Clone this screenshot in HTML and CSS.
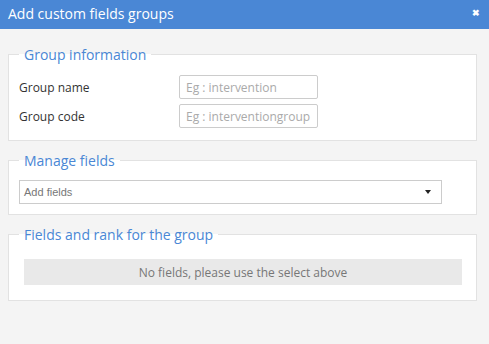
FILE: index.html
```html
<!DOCTYPE html>
<html lang="en">
<head>
    <meta charset="UTF-8">
    <title>Add custom fields groups</title>
    <link rel="stylesheet" href="styles.css">
</head>
<body>
    <div class="modal">
        <div class="modal-header">
            <h2 class="modal-title">Add custom fields groups</h2>
            <span class="close">&#10006;</span>
        </div>

        <div class="modal-body">
            <fieldset class="box">
                <legend>Group information</legend>
                <div class="form-row">
                    <label>Group name</label>
                    <input type="text" class="text-input" placeholder="Eg : intervention">
                </div>
                <div class="form-row">
                    <label>Group code</label>
                    <input type="text" class="text-input" placeholder="Eg : interventiongroup">
                </div>
            </fieldset>

            <fieldset class="box box-compact">
                <legend>Manage fields</legend>
                <div class="select">
                    <span>Add fields</span>
                    <span class="caret"></span>
                </div>
            </fieldset>

            <fieldset class="box">
                <legend>Fields and rank for the group</legend>
                <div class="empty">No fields, please use the select above</div>
            </fieldset>
        </div>
    </div>
</body>
</html>
```

FILE: styles.css
```css
* {
    margin: 0;
    padding: 0;
    box-sizing: border-box;
}

body {
    font-family: 'Open Sans', 'Liberation Sans', sans-serif;
    background: #f4f4f4;
    color: #333;
}

.modal-header {
    background: #4a87d5;
    height: 29px;
    display: flex;
    align-items: center;
    justify-content: space-between;
    padding: 0 9px 3px 8px;
}

.modal-title {
    color: #fff;
    font-size: 14px;
    font-weight: 400;
}

.close {
    color: #fff;
    font-size: 9px;
    font-weight: 700;
    margin-top: -1px;
}

.modal-body {
    padding: 16px 12px 0 8px;
}

.box {
    background: #fff;
    border: 1px solid #e2e2e2;
    padding: 11px 10px 12px 10px;
    margin-bottom: 10px;
}

.box-compact {
    padding: 10px 10px 10px 10px;
}

.box legend {
    color: #4a87d5;
    font-size: 14px;
    padding: 0 5px;
}

.form-row {
    display: flex;
    align-items: center;
    margin-bottom: 5px;
}

.form-row:last-child {
    margin-bottom: 0;
}

.form-row label {
    width: 160px;
    font-size: 12px;
}

.text-input {
    width: 139px;
    height: 24px;
    border: 1px solid #ccc;
    border-radius: 2px;
    padding: 0 6px;
    font-family: 'Open Sans', sans-serif;
    font-size: 12px;
    color: #333;
}

.text-input::placeholder {
    color: #aaa;
}

.select {
    width: 423px;
    height: 24px;
    border: 1px solid #ccc;
    display: flex;
    align-items: center;
    justify-content: space-between;
    padding: 0 10px 0 4px;
    font-family: 'Liberation Sans', Arial, sans-serif;
    font-size: 11px;
    color: #777;
}

.caret {
    width: 0;
    height: 0;
    border-left: 3.5px solid transparent;
    border-right: 3.5px solid transparent;
    border-top: 4px solid #222;
}

.empty {
    margin: 4px 4px 3px 5px;
    background: #e9e9e9;
    height: 26px;
    display: flex;
    align-items: center;
    justify-content: center;
    font-size: 12px;
    color: #777;
}
```
